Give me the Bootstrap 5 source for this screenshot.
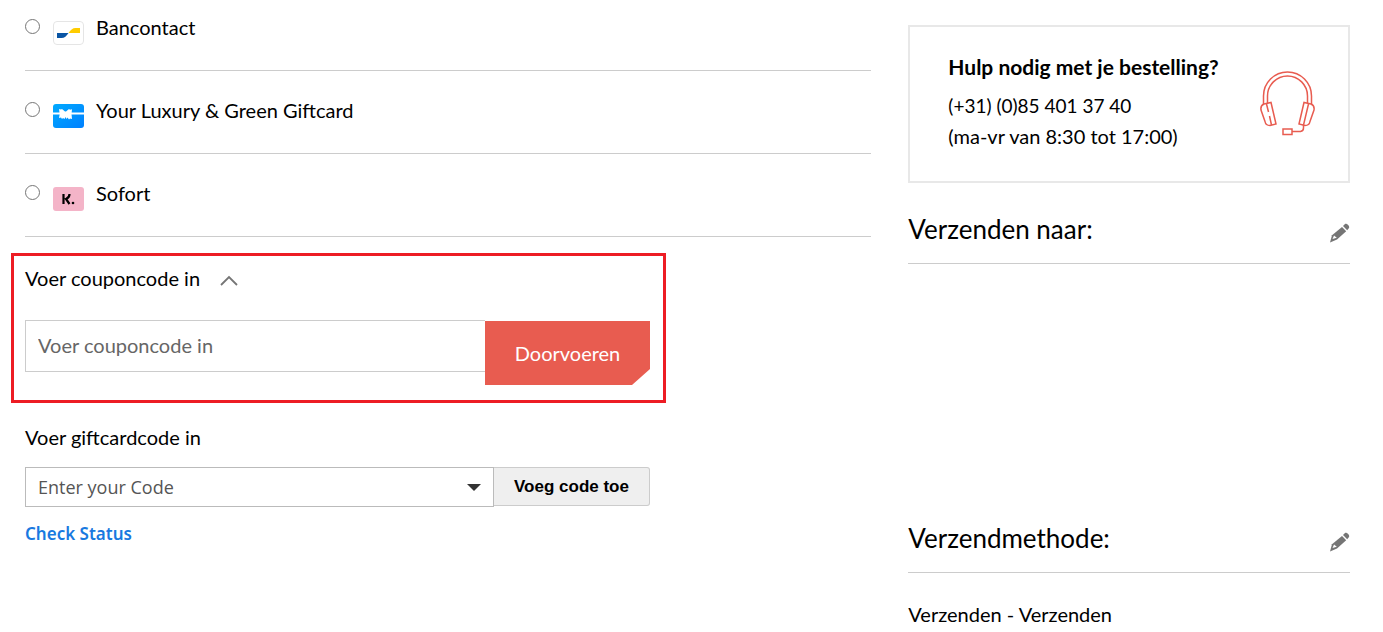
<!DOCTYPE html>
<html lang="nl">
<head>
<meta charset="utf-8">
<meta name="viewport" content="width=device-width, initial-scale=1">
<title>Afrekenen</title>
<link href="https://cdn.jsdelivr.net/npm/bootstrap@5.3.0/dist/css/bootstrap.min.css" rel="stylesheet">
<style>
body{font-family:Lato,"Liberation Sans",sans-serif;font-size:20px;line-height:30px;color:#000;overflow-x:hidden}
.checkout{padding:0 33px 0 25px}
.main-col{padding-right:37px}
.pay-row{padding:24px 0 25px;border-bottom:1px solid #ccc}
.pay-row:first-child{padding-top:12px}
.pay-row input{appearance:none;width:15px;height:15px;border:1px solid #767676;border-radius:50%;background:#fff;margin:7px 13px 0 0}
.pay-row input:checked{border:5px solid #e85c50}
.pay-row svg{margin:9px 12px 0 0}
.pay-row svg,.pay-row input{flex:none}
.coupon-box{max-width:655px;margin:16px 0 0 -14px;border:3px solid #ed1c24;padding:7px 13px 15px 11px}
.coupon-toggle{border:0;background:none;padding:0;gap:20px}
.coupon-form{margin-top:27px}
.field-box{border:1px solid #ccc;border-radius:0;color:#555;padding:0 12px;background:#fff}
.field-box::placeholder{color:#666;opacity:1}
.coupon-form .field-box{height:52px;border-right:0;font-size:20px;padding-bottom:2px}
.apply-btn{width:165px;height:64px;margin-top:1px;border:0;padding-bottom:2px;background:#e85c50;color:#fff;clip-path:polygon(0 0,100% 0,100% 75%,calc(100% - 18px) 100%,0 100%)}
.gift{max-width:625px;margin-top:19px}
.gift-form{margin-top:15px}
.gift-form .field-box{height:40px;border-color:#bbb;font:18px "Open Sans",sans-serif;appearance:none}
.gift-form svg{right:13px;top:17px;pointer-events:none}
.add-btn{width:156px;height:39px;border:1px solid #ccc;border-left:0;border-radius:0 3px 3px 0;background:#efefef;color:#000;font:bold 17px "Liberation Sans",sans-serif}
.status-link{display:inline-block;margin-top:12px;font:600 17px/30px "Noto Sans",sans-serif;color:#1979e0;text-decoration:none}
.help-box{border:2px solid #e8e8e8;margin-top:25px;padding:23px 33px 30px 38px}
.help-box h2{font-size:21px;line-height:34px;font-weight:700;margin:0 0 7px}
.help-box a{color:#000;text-decoration:none;font-size:19px}
.side-head{border-bottom:1px solid #ccc;padding-bottom:14px}
.side-head h3{font-size:26px;line-height:40px;font-weight:400;margin:0}
.side-head button{border:0;background:none;padding:7px 0 0;line-height:0}
.ship-to{margin-top:26px}
.ship-address{min-height:254px}
.ship-name{margin-top:26px}
</style>
</head>
<body>
<main class="checkout">
<div class="row g-0">
  <section class="col-8 main-col">
    <div>
      <div class="pay-row d-flex align-items-start">
        <input type="radio" name="pay" id="pay1">
        <svg width="31" height="24" viewBox="0 0 31 24" aria-hidden="true"><rect x=".5" y=".5" width="30" height="23" rx="3.5" fill="#fff" stroke="#e5e5e5"/><path d="M4 12h11.500c-2 3-4 5-7 5H4z" fill="#0a55a4"/><path d="M15.500 12c2-3 4-5 7-5H27v5z" fill="#fc0"/></svg>
        <label for="pay1">Bancontact</label>
      </div>
      <div class="pay-row d-flex align-items-start">
        <input type="radio" name="pay" id="pay2">
        <svg width="31" height="24" viewBox="0 0 31 24" aria-hidden="true"><defs><linearGradient id="gc" x1="0" y1="0" x2="1" y2="1"><stop offset="0" stop-color="#00aaff"/><stop offset="1" stop-color="#0080ff"/></linearGradient></defs><rect width="31" height="24" rx="3" fill="url(#gc)"/><path d="M0 8.500h31v2H0z" fill="#fff"/><path d="M6 5l2 .5 1-.5 3 2.500h1L16 5l1 .8 2-.5-.5 4.700.5 5-2-.5-1 1-1.500-2-1 1.500-1-2-1 2-1.500-1L9 15l-1-1.500-2 .5.700-4z" fill="#fff"/></svg>
        <label for="pay2">Your Luxury &amp; Green Giftcard</label>
      </div>
      <div class="pay-row d-flex align-items-start">
        <input type="radio" name="pay" id="pay3">
        <svg width="31" height="24" viewBox="0 0 31 24" aria-hidden="true"><rect width="31" height="24" rx="3" fill="#f4b4c8"/><path d="M10.500 7v10M16.500 7c0 2.500-1 4-3.500 5l3.500 5" fill="none" stroke="#000" stroke-width="2.200"/><circle cx="20" cy="16" r="1.300"/></svg>
        <label for="pay3">Sofort</label>
      </div>
    </div>

    <div class="coupon-box">
      <button type="button" class="coupon-toggle d-flex align-items-center" aria-expanded="true">Voer couponcode in
        <svg class="mt-1" width="18" height="12" viewBox="0 0 18 12" aria-hidden="true"><path d="M1 11l8-8 8 8" fill="none" stroke="#757575" stroke-width="1.800"/></svg>
      </button>
      <form class="coupon-form d-flex align-items-start">
        <input type="text" class="field-box flex-fill w-100" placeholder="Voer couponcode in" aria-label="Voer couponcode in">
        <button type="button" class="apply-btn flex-shrink-0">Doorvoeren</button>
      </form>
    </div>

    <div class="gift">
      <label for="gift" class="d-block">Voer giftcardcode in</label>
      <form class="gift-form d-flex align-items-start">
        <div class="position-relative flex-fill">
          <select id="gift" class="field-box w-100 d-block"><option>Enter your Code</option></select>
          <svg class="position-absolute" width="14" height="7" viewBox="0 0 14 7" aria-hidden="true"><path d="M0 0h14L7 7z" fill="#333"/></svg>
        </div>
        <button type="button" class="add-btn flex-shrink-0">Voeg code toe</button>
      </form>
      <a href="#" class="status-link">Check Status</a>
    </div>
  </section>

  <aside class="col-4">
    <div class="help-box d-flex justify-content-between align-items-start">
      <div>
        <h2>Hulp nodig met je bestelling?</h2>
        <a href="tel:+31854013740" class="d-block">(+31) (0)85 401 37 40</a>
        <div>(ma-vr van 8:30 tot 17:00)</div>
      </div>
      <svg class="mt-3 pt-1 flex-shrink-0" width="55" height="72" viewBox="0 -2 55 68" fill="none" stroke="#e85c50" stroke-width="1.500" aria-hidden="true"><path d="M3.500 32V24a24 24 0 0 1 48 0v8M7.500 31V24a20 20 0 0 1 40 0v7"/><path d="M4 32l7-1.500 5 21.500-6 1.500c-3 0-4.500-1-5-4L1 38c-.5-3 .5-5 3-6z"/><path d="M51 32l-7-1.500L39 52l6 1.500c3 0 4.500-1 5-4L54 38c.5-3-.5-5-3-6z"/><path d="M6.500 32l2 8M9.500 44l2 9M48.500 32L43.500 53v3q0 3-3 3.500H32"/><rect x="23" y="57" width="9" height="5.500"/></svg>
    </div>

    <div class="side-head ship-to d-flex justify-content-between align-items-center">
      <h3>Verzenden naar:</h3>
      <button type="button" aria-label="Verzendadres wijzigen"><svg width="21" height="20" viewBox="0 0 21 20" aria-hidden="true"><path d="M1 19.500l2-7.300L13 4l4.200 4.200L8 16.500z" fill="#757575"/><path d="M14 3l2-2c1.500-1 5 2 4 4l-1.800 2.200z" fill="#757575"/><path d="M3.500 16l1.500-3.500 2.800 2.200z" fill="#fff"/></svg></button>
    </div>
    <div class="ship-address"></div>
    <div class="side-head d-flex justify-content-between align-items-center">
      <h3>Verzendmethode:</h3>
      <button type="button" aria-label="Verzendmethode wijzigen"><svg width="21" height="20" viewBox="0 0 21 20" aria-hidden="true"><path d="M1 19.500l2-7.300L13 4l4.200 4.200L8 16.500z" fill="#757575"/><path d="M14 3l2-2c1.500-1 5 2 4 4l-1.800 2.200z" fill="#757575"/><path d="M3.500 16l1.500-3.500 2.800 2.200z" fill="#fff"/></svg></button>
    </div>
    <div class="ship-name">Verzenden - Verzenden</div>
  </aside>
</div>
</main>
<script src="https://cdn.jsdelivr.net/npm/bootstrap@5.3.0/dist/js/bootstrap.bundle.min.js"></script>
</body>
</html>
